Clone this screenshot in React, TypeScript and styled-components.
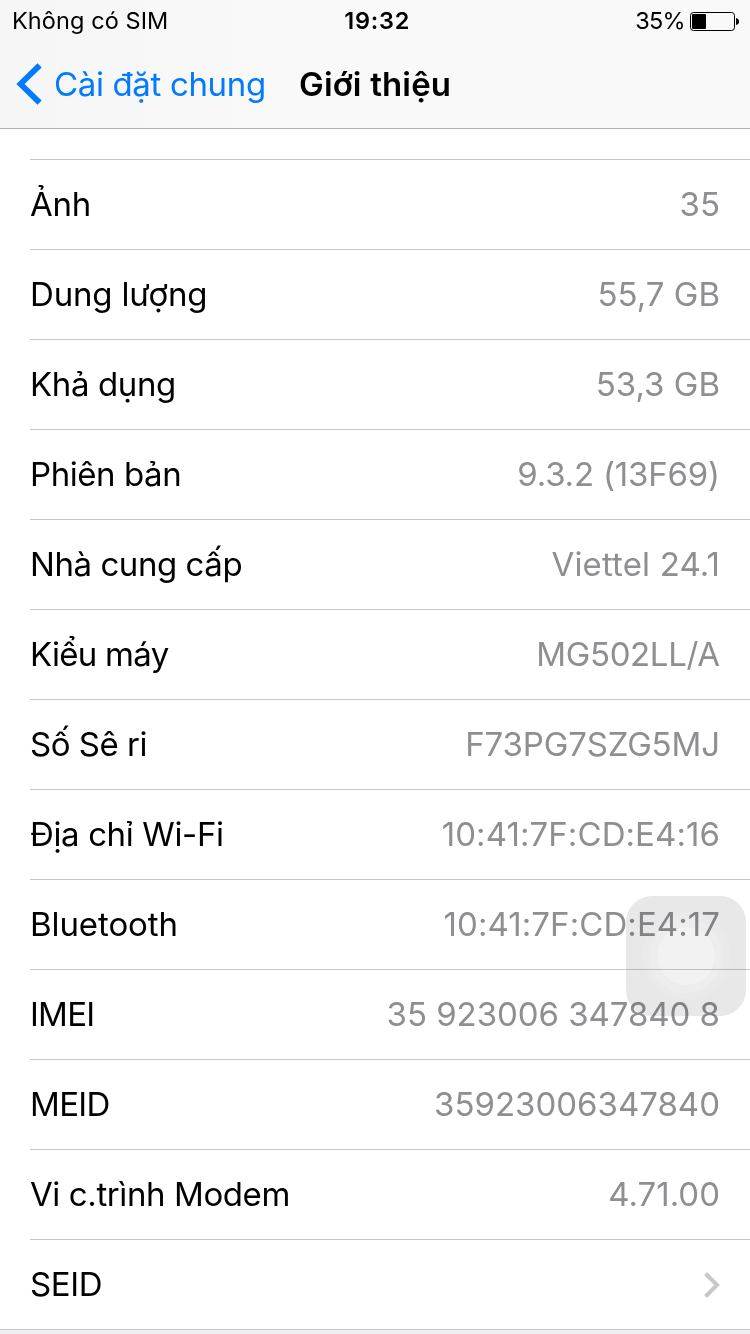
import React from "react";
import styled, { createGlobalStyle } from "styled-components";

const GlobalStyle = createGlobalStyle`
  * { box-sizing: border-box; }
  html, body { margin: 0; padding: 0; background: #efeff4; overflow: hidden; }
  body { font-family: Inter, "Noto Sans", sans-serif; color: #000; }
`;

const Screen = styled.main`
  position: relative;
  width: 750px;
  height: 1334px;
  overflow: hidden;
  background: #efeff4;
`;

const Header = styled.header`
  height: 129px;
  background: linear-gradient(90deg, #f6f6f6 0%, #f9f9f9 40%, #f9f9f9 100%);
  border-bottom: 1px solid #b2b2b2;
`;

const StatusBar = styled.div`
  display: grid;
  grid-template-columns: 1fr auto 1fr;
  align-items: center;
  height: 40px;
  padding: 1px 10px 0 12px;
  font-size: 23.5px;
  line-height: 28px;
  white-space: nowrap;
`;

const Carrier = styled.span`
  letter-spacing: 0.08px;
`;

const Clock = styled.span`
  padding-left: 2.4px;
  font-weight: 600;
  letter-spacing: 0.8px;
`;

const BatteryGroup = styled.div`
  display: flex;
  justify-content: flex-end;
  align-items: center;
  gap: 5px;
`;

const BatteryLevel = styled.span`
  letter-spacing: -0.7px;
`;

const NavBar = styled.nav`
  display: flex;
  align-items: center;
  height: 88px;
  padding-left: 16px;
  white-space: nowrap;
`;

const BackButton = styled.a`
  display: flex;
  align-items: center;
  gap: 10px;
  width: 283px;
  color: #007aff;
  font-size: 33px;
  letter-spacing: -0.35px;
`;

const Title = styled.h1`
  margin: 0;
  font-size: 33px;
  font-weight: 600;
  letter-spacing: 0.16px;
`;

const List = styled.ul`
  margin: 0;
  padding: 30px 0 0 30px;
  list-style: none;
  background: #fff;
  border-bottom: 1px solid #c8c7cc;
`;

const Row = styled.li`
  display: flex;
  justify-content: space-between;
  align-items: center;
  height: 90px;
  padding-right: 30px;
  border-top: 1px solid #c8c7cc;
  font-size: 33px;
  line-height: 40px;
  white-space: nowrap;
`;

const Label = styled.span<{ $tracking: number }>`
  padding-bottom: 2px;
  letter-spacing: ${(p) => p.$tracking}px;
`;

const Value = styled.span<{ $tracking: number }>`
  padding-bottom: 2px;
  color: #8e8e93;
  letter-spacing: ${(p) => p.$tracking}px;
  margin-right: ${(p) => -p.$tracking}px;
`;

const AssistiveTouch = styled.div`
  position: absolute;
  left: 626px;
  top: 896px;
  width: 120px;
  height: 120px;
  border-radius: 26px;
  display: grid;
  place-items: center;
  background: #e8e8e8;
  mix-blend-mode: multiply;
`;

const OuterRing = styled.div`
  display: grid;
  place-items: center;
  width: 88px;
  height: 88px;
  border-radius: 50%;
  background: #eaeaea;
`;

const MiddleRing = styled(OuterRing)`
  width: 74px;
  height: 74px;
  background: #ededed;
`;

const Knob = styled(OuterRing)`
  width: 58px;
  height: 58px;
  background: #f2f2f2;
`;

interface Entry {
  label: string;
  value?: string;
  labelTracking?: number;
  valueTracking?: number;
}

const entries: Entry[] = [
  { label: "Ảnh", value: "35", labelTracking: -0.3 },
  { label: "Dung lượng", value: "55,7 GB", labelTracking: -0.18 },
  { label: "Khả dụng", value: "53,3 GB", labelTracking: -0.38 },
  { label: "Phiên bản", value: "9.3.2 (13F69)", labelTracking: -0.44, valueTracking: -0.2 },
  { label: "Nhà cung cấp", value: "Viettel 24.1", labelTracking: -0.44, valueTracking: 0.15 },
  { label: "Kiểu máy", value: "MG502LL/A", labelTracking: -0.72, valueTracking: -0.35 },
  { label: "Số Sê ri", value: "F73PG7SZG5MJ", labelTracking: -0.48, valueTracking: -0.16 },
  { label: "Địa chỉ Wi-Fi", value: "10:41:7F:CD:E4:16", labelTracking: -0.37, valueTracking: 0.08 },
  { label: "Bluetooth", value: "10:41:7F:CD:E4:17", labelTracking: -0.08, valueTracking: 0.08 },
  { label: "IMEI", value: "35 923006 347840 8", labelTracking: -0.75, valueTracking: -0.05 },
  { label: "MEID", value: "35923006347840", labelTracking: -0.65 },
  { label: "Vi c.trình Modem", value: "4.71.00", labelTracking: -0.4 },
  { label: "SEID", labelTracking: -0.4 },
];

const BatteryIcon = () => (
  <svg width="50" height="20" viewBox="0 0 50 20">
    <rect x="0.5" y="1.5" width="44" height="18" rx="3" fill="none" stroke="#000" />
    <rect x="2" y="3" width="14" height="15" rx="1" />
    <path d="M46 7 Q49 7.5 49 10.5 Q49 13.5 46 14 Z" />
  </svg>
);

const BackIcon = () => (
  <svg width="28" height="42" viewBox="0 0 28 42">
    <path
      d="M23.6 2.4 L4.5 21 L23.6 39.6"
      fill="none"
      stroke="#007aff"
      strokeWidth="5.8"
    />
  </svg>
);

const DisclosureIcon = () => (
  <svg width="16" height="26" viewBox="0 0 16 26">
    <path d="M1.5 1.5 L13 13 L1.5 24.5" fill="none" stroke="#c7c7cc" strokeWidth="4" />
  </svg>
);

export default function App() {
  return (
    <Screen>
      <GlobalStyle />
      <Header>
        <StatusBar>
          <Carrier>Không có SIM</Carrier>
          <Clock>19:32</Clock>
          <BatteryGroup>
            <BatteryLevel>35%</BatteryLevel>
            <BatteryIcon />
          </BatteryGroup>
        </StatusBar>
        <NavBar>
          <BackButton>
            <BackIcon />
            <span>Cài đặt chung</span>
          </BackButton>
          <Title>Giới thiệu</Title>
        </NavBar>
      </Header>
      <List>
        {entries.map((e) => (
          <Row key={e.label}>
            <Label $tracking={e.labelTracking ?? 0}>{e.label}</Label>
            {e.value ? (
              <Value $tracking={e.valueTracking ?? 0}>{e.value}</Value>
            ) : (
              <DisclosureIcon />
            )}
          </Row>
        ))}
      </List>
      <AssistiveTouch>
        <OuterRing>
          <MiddleRing>
            <Knob />
          </MiddleRing>
        </OuterRing>
      </AssistiveTouch>
    </Screen>
  );
}
